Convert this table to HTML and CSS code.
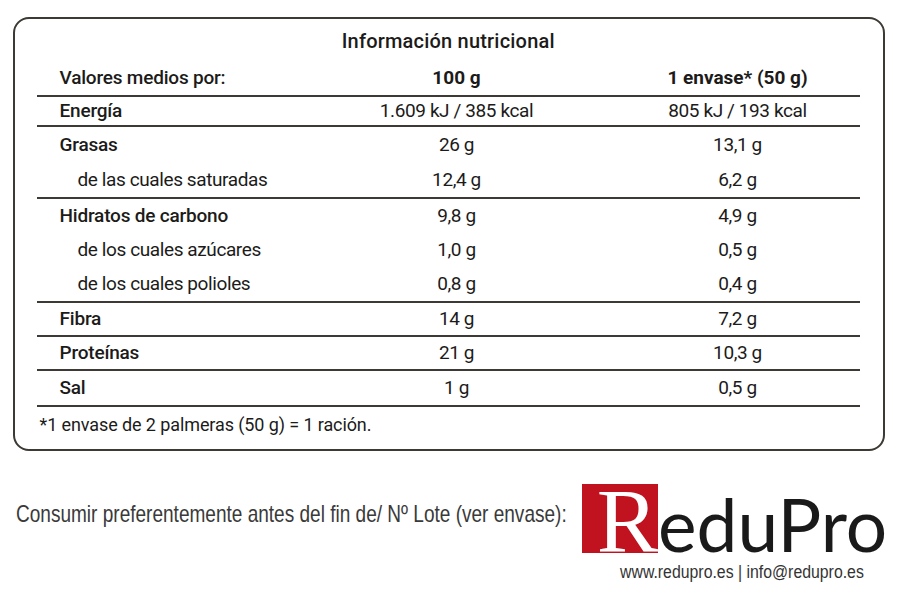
FILE: index.html
```html
<!DOCTYPE html>
<html lang="es">
<head>
<meta charset="utf-8">
<title>Información nutricional</title>
<link rel="stylesheet" href="styles.css">
</head>
<body>
<div class="label">
  <div class="title">Información nutricional</div>
  <div class="group">
    <div class="row head"><span class="c1">Valores medios por:</span><span class="c2">100 g</span><span class="c3">1 envase* (50 g)</span></div>
  </div>
  <div class="group">
    <div class="row energy"><span class="c1">Energía</span><span class="c2 v">1.609 kJ / 385 kcal</span><span class="c3 v">805 kJ / 193 kcal</span></div>
  </div>
  <div class="group">
    <div class="row tall"><span class="c1">Grasas</span><span class="c2 v">26 g</span><span class="c3 v">13,1 g</span></div>
    <div class="row tall sub"><span class="c1">de las cuales saturadas</span><span class="c2 v">12,4 g</span><span class="c3 v">6,2 g</span></div>
  </div>
  <div class="group">
    <div class="row"><span class="c1">Hidratos de carbono</span><span class="c2 v">9,8 g</span><span class="c3 v">4,9 g</span></div>
    <div class="row sub"><span class="c1">de los cuales azúcares</span><span class="c2 v">1,0 g</span><span class="c3 v">0,5 g</span></div>
    <div class="row sub"><span class="c1">de los cuales polioles</span><span class="c2 v">0,8 g</span><span class="c3 v">0,4 g</span></div>
  </div>
  <div class="group">
    <div class="row short"><span class="c1">Fibra</span><span class="c2 v">14 g</span><span class="c3 v">7,2 g</span></div>
  </div>
  <div class="group">
    <div class="row short"><span class="c1">Proteínas</span><span class="c2 v">21 g</span><span class="c3 v">10,3 g</span></div>
  </div>
  <div class="group">
    <div class="row"><span class="c1">Sal</span><span class="c2 v">1 g</span><span class="c3 v">0,5 g</span></div>
  </div>
  <div class="note">*1 envase de 2 palmeras (50 g) = 1 ración.</div>
</div>
<div class="footer">
  <p class="bbd">Consumir preferentemente antes del fin de/ Nº Lote (ver envase):</p>
  <div class="brand">
    <div class="logo"><span class="logo-r">R</span><span class="logo-rest">eduPro</span></div>
    <div class="web">www.redupro.es | info@redupro.es</div>
  </div>
</div>
</body>
</html>
```
FILE: styles.css
```css
html {
  margin: 0;
  padding: 0;
  overflow: hidden;
  background: #ffffff;
}
body {
  margin: 0;
  padding: 17px 0 0 13px;
  box-sizing: border-box;
  width: 900px;
  height: 600px;
  overflow: hidden;
  font-family: Roboto, "Noto Sans", sans-serif;
  color: #1c1b1a;
}
.label {
  width: 872px;
  height: 434px;
  box-sizing: border-box;
  border: 2.5px solid #3d3934;
  border-radius: 16px;
  padding: 0 23px 0 21.5px;
}
.title {
  height: 40px;
  line-height: 44px;
  text-align: center;
  font-size: 20px;
  font-weight: 500;
  letter-spacing: 0.2px;
}
.group {
  border-bottom: 2px solid #3d3934;
}
.row {
  display: grid;
  grid-template-columns: 300px 240px 282px;
  align-items: center;
  height: 34px;
  font-size: 19px;
  font-weight: 500;
  letter-spacing: -0.2px;
}
.row.head { height: 36px; }
.row.head .c2, .row.head .c3 { font-weight: 700; letter-spacing: 0; }
.row.energy { height: 27.5px; }
.row.tall { height: 35px; }
.row.short { height: 32px; }
.c1 { padding-left: 23px; }
.sub .c1 { padding-left: 41px; font-weight: 400; letter-spacing: -0.4px; }
.c2 { text-align: center; }
.c3 { text-align: center; padding-left: 40px; }
.v { font-weight: 400; letter-spacing: -0.4px; }
.note {
  height: 36px;
  line-height: 36px;
  padding-left: 3px;
  font-size: 18px;
  letter-spacing: -0.1px;
}
.footer {
  display: flex;
  align-items: flex-start;
  margin: 33px 0 0 -13px;
  padding: 0 0 0 16px;
}
.bbd {
  flex: 0 0 551px;
  width: 551px;
  margin: 16px 0 0 0;
  white-space: nowrap;
  font-family: "Liberation Sans", Arial, sans-serif;
  font-size: 24px;
  line-height: 28px;
  color: #3a3a3a;
  transform: scaleX(0.793);
  transform-origin: left center;
}
.brand {
  flex: 0 0 303px;
  margin-left: 15px;
}
.logo {
  display: flex;
  align-items: baseline;
}
.logo-r {
  display: block;
  width: 76px;
  height: 64px;
  padding-top: 5px;
  background: #c1121f;
  color: #ffffff;
  font-family: "Liberation Serif", serif;
  font-size: 92px;
  line-height: 64px;
  text-align: right;
}
.logo-rest {
  font-family: Lato, sans-serif;
  font-size: 73px;
  line-height: 58px;
  color: #1a1a1a;
  font-weight: 400;
}
.web {
  margin-top: 9px;
  padding-left: 38px;
  white-space: nowrap;
  font-family: "Liberation Sans", Arial, sans-serif;
  font-size: 18px;
  line-height: 20px;
  color: #333333;
  transform: scaleX(0.88);
  transform-origin: 38px center;
}
```
